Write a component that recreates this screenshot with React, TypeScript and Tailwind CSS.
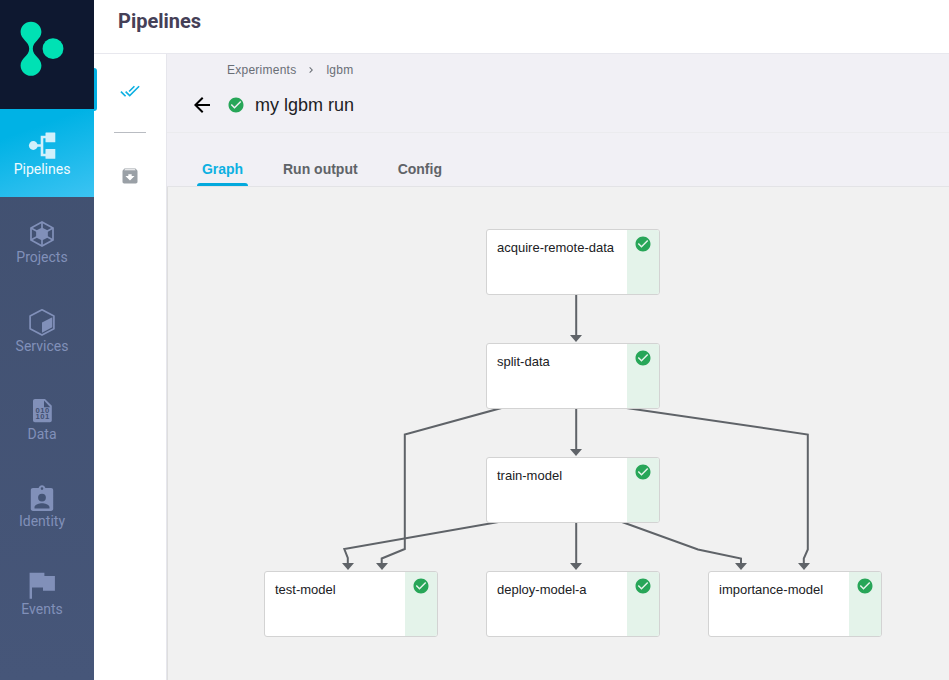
import type { ReactNode } from "react";
import { MdArchive, MdArrowBack, MdCheckCircle, MdChevronRight, MdDoneAll } from "react-icons/md";

function Logo() {
  return (
    <svg width="94" height="109" viewBox="0 0 94 109" fill="#00e1b4">
      <path d="M31 21.800c5.900 0 10.400 4.600 10.400 10.200 0 7.400-8.600 9.400-8.600 16.700S41.400 58 41.400 65.400c0 5.700-4.600 10.400-10.400 10.400s-10.400-4.700-10.400-10.400c0-7.400 8.600-9.400 8.600-16.700S20.600 39.400 20.600 32c0-5.600 4.500-10.200 10.400-10.200z" />
      <circle cx="53" cy="48.700" r="10.400" />
    </svg>
  );
}

function PipelinesIcon() {
  return (
    <svg width="30" height="30" viewBox="27 130 30 30" fill="#d1f0fb">
      <circle cx="33.300" cy="145.500" r="4.400" />
      <rect x="45.500" y="132.400" width="9.800" height="9.800" rx=".5" />
      <rect x="45.500" y="149" width="9.800" height="9.800" rx=".5" />
      <path d="M36 145.500h6M46 137h-4v18h4" fill="none" stroke="#d1f0fb" strokeWidth="2.600" />
    </svg>
  );
}

function ProjectsIcon() {
  return (
    <svg width="30" height="30" viewBox="27 219 30 30" fill="none" stroke="#8190b9" strokeWidth="1.700">
      <path d="M42 222l11 6.100v11.800L42 246l-11-6.100v-11.800z" />
      <path d="M42 222v24M31 228.100l22 11.800M53 228.100l-22 11.800" />
      <path d="M42 228.500l5 2.500v6l-5 2.500-5-2.500v-6z" fill="#8190b9" strokeLinejoin="round" />
    </svg>
  );
}

function ServicesIcon() {
  return (
    <svg width="30" height="30" viewBox="27 307 30 30" fill="none" stroke="#8190b9" strokeWidth="1.700">
      <path d="M42 309.800l11.900 6.300v12.700L42 335.100l-11.900-6.300v-12.700z" strokeLinejoin="round" />
      <path d="M42 322.500l10.300-5.200v9.900L42 332.700z" fill="#8190b9" stroke="none" />
    </svg>
  );
}

function DataIcon() {
  return (
    <svg width="30" height="30" viewBox="27 395 30 30" fill="#8190b9">
      <path d="M35 399h10l6.800 6.800v14.500c0 1.200-.8 2-2 2H35c-1.200 0-2-.8-2-2V401c0-1.200.8-2 2-2z" />
      <path d="M44 400.600l6.300 6.600H44z" fill="#425173" />
      <text
        y="413.400"
        fill="#425173"
        fontFamily="'Liberation Sans', sans-serif"
        fontSize="7.700"
        fontWeight="700"
        letterSpacing=".4"
      >
        <tspan x="35.600">010</tspan>
        <tspan x="35.600" dy="6">101</tspan>
      </text>
    </svg>
  );
}

function IdentityIcon() {
  return (
    <svg width="30" height="30" viewBox="27 483 30 30" fill="#8190b9">
      <path fillRule="evenodd" d="M33 488h5.600c.5-1.700 1.700-2.800 3.400-2.800s2.900 1.100 3.400 2.800H51c1.300 0 2.200.9 2.200 2.200v18.600c0 1.300-.9 2.200-2.200 2.200H33c-1.300 0-2.200-.9-2.200-2.200v-18.600c0-1.300.9-2.200 2.200-2.200zm9-.7a1.300 1.300 0 1 0 0 2.600 1.300 1.300 0 0 0 0-2.600zm0 6.400a3.900 3.900 0 1 0 0 7.800 3.900 3.900 0 0 0 0-7.800zm7.500 14.800v-1.300c0-2.600-5-3.900-7.500-3.900s-7.500 1.300-7.500 3.900v1.300z" />
    </svg>
  );
}

function EventsIcon() {
  return (
    <svg width="30" height="30" viewBox="27 571 30 30" fill="#8190b9">
      <path d="M29.600 572.700h14.800v3.300h10.500v14.800H43v-3.300H32v11.300h-2.400z" />
    </svg>
  );
}

const navItems: { label: string; icon: ReactNode; gap: string; active?: boolean }[] = [
  { label: "Pipelines", icon: <PipelinesIcon />, gap: "mt-px", active: true },
  { label: "Projects", icon: <ProjectsIcon />, gap: "mt-0" },
  { label: "Services", icon: <ServicesIcon />, gap: "mt-px" },
  { label: "Data", icon: <DataIcon />, gap: "mt-px" },
  { label: "Identity", icon: <IdentityIcon />, gap: "mt-0" },
  { label: "Events", icon: <EventsIcon />, gap: "mt-0" },
];

function Sidebar() {
  return (
    <aside className="flex w-[94px] shrink-0 flex-col bg-linear-to-b from-[#404f6e] to-[#465679]">
      <div className="h-[109px] shrink-0 bg-[#0e1830]">
        <Logo />
      </div>
      <nav className="flex flex-col font-['Roboto',sans-serif] text-sm leading-4">
        {navItems.map((item) => (
          <a
            key={item.label}
            className={
              item.active
                ? "flex h-[88px] flex-col items-center bg-linear-[160deg] from-[#00b2e5] from-25% to-[#3cc3f2] pt-[21px] pr-2.5 text-[#f0fafe]"
                : "flex h-[88px] flex-col items-center pt-[22px] pr-2.5 text-[#8190b9]"
            }
          >
            {item.icon}
            <span className={item.gap}>{item.label}</span>
          </a>
        ))}
      </nav>
    </aside>
  );
}

function SubNav() {
  return (
    <div className="flex w-[73px] shrink-0 border-r border-[#e6e6ec] bg-white">
      <div className="mt-3.5 h-[43px] w-[3px] rounded-r-[3px] bg-[#03b0e2]" />
      <div className="flex flex-1 flex-col items-center pr-1">
        <MdDoneAll className="mt-[27px] size-5 text-[#0db0e2]" />
        <div className="mt-[31px] h-px w-8 bg-[#b9bcc2]" />
        <MdArchive className="mt-[33px] size-5 text-[#9aa0a6]" />
      </div>
    </div>
  );
}

const nodes = [
  { name: "acquire-remote-data", x: 486, y: 229 },
  { name: "split-data", x: 486, y: 343 },
  { name: "train-model", x: 486, y: 457 },
  { name: "test-model", x: 264, y: 571 },
  { name: "deploy-model-a", x: 486, y: 571 },
  { name: "importance-model", x: 708, y: 571 },
];

const edges = [
  "M576.200 290V340",
  "M576.200 400V454",
  "M576.200 515V568",
  "M514 404.500L404.800 434.500V549L381.700 558.500V566",
  "M599 404L807.800 434.500V549.500L803.800 558.500V566",
  "M510 520L344.300 549L347.800 558V566",
  "M611 518L698 549.500L741 558.500V566",
];

const arrows = [
  [576, 335],
  [576, 449],
  [576, 563],
  [348, 563],
  [382, 563],
  [741, 563],
  [804, 563],
];

function Graph() {
  return (
    <div className="relative flex-1 overflow-hidden border-l border-[#dedede] bg-[#f1f1f1]">
      <svg className="absolute top-0 left-0" width="781" height="493" viewBox="168 187 781 493">
        <g fill="none" stroke="#5f6368" strokeWidth="2">
          {edges.map((d) => (
            <path key={d} d={d} />
          ))}
        </g>
        <g fill="#5f6368">
          {arrows.map(([x, y]) => (
            <path key={`${x}-${y}`} d={`M${x - 6} ${y}h12l-6 7z`} />
          ))}
        </g>
      </svg>
      {nodes.map((node) => (
        <div
          key={node.name}
          className="absolute flex h-[66px] w-[174px] overflow-hidden rounded-[3px] border border-[#d3d3d3] bg-white"
          style={{ left: node.x - 168, top: node.y - 187 }}
        >
          <div className="flex-1 pt-2.5 pl-2.5 text-[13px] leading-[15px] whitespace-nowrap text-[#202124]">{node.name}</div>
          <div className="flex w-8 justify-center bg-[#e4f3ea] pt-[5px]">
            <MdCheckCircle className="size-[18px] text-[#27a658]" />
          </div>
        </div>
      ))}
    </div>
  );
}

function RunHeader() {
  return (
    <div className="h-[133px] shrink-0 border-b border-[#e3e3e6] bg-[#f1f0f5]">
      <div className="flex h-[79px] flex-col border-b border-[#ebebee]">
        <div className="flex h-8 items-center pl-[60px] text-xs tracking-[.25px] text-[#696e75]">
          <span>Experiments</span>
          <MdChevronRight className="mx-[9px] size-3" />
          <span>lgbm</span>
        </div>
        <div className="flex h-[38px] items-center pl-[23px]">
          <MdArrowBack className="size-6 text-black" />
          <MdCheckCircle className="ml-[13px] size-[18px] text-[#27a658]" />
          <h2 className="ml-2.5 text-lg text-[#202124]">my lgbm run</h2>
        </div>
      </div>
      <div className="flex h-[53px] items-end pl-[30px] text-sm leading-4 font-bold text-[#5f6368]">
        <div className="w-[51px] text-center text-[#0db0e2]">
          Graph
          <div className="mt-1.5 h-[3px] rounded-t-[3px] bg-[#03a9dd]" />
        </div>
        <div className="ml-[35px] pb-[9px]">Run output</div>
        <div className="ml-10 pb-[9px]">Config</div>
      </div>
    </div>
  );
}

export default function App() {
  return (
    <div className="flex h-[680px] w-[949px] overflow-hidden bg-white font-['Liberation_Sans',sans-serif]">
      <Sidebar />
      <div className="flex min-w-0 flex-1 flex-col">
        <header className="h-[54px] shrink-0 border-b border-[#e8e8ee] bg-white pt-[9px] pl-6">
          <h1 className="font-['Roboto',sans-serif] text-xl leading-6 font-bold text-[#454057]">Pipelines</h1>
        </header>
        <div className="flex min-h-0 flex-1">
          <SubNav />
          <main className="flex min-w-0 flex-1 flex-col">
            <RunHeader />
            <Graph />
          </main>
        </div>
      </div>
    </div>
  );
}
